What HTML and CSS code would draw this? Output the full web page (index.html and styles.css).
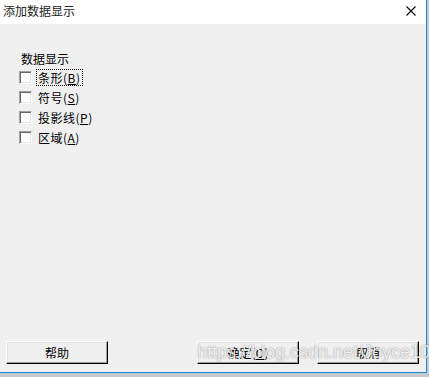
FILE: index.html
```html
<!DOCTYPE html>
<html>
<head>
    <title>添加数据显示</title>
    <link rel="stylesheet" href="styles.css">
</head>
<body>
    <div class="screen">
        <div class="dialog">
            <!-- Title bar -->
            <div class="titlebar">
                <span class="title">添加数据显示</span>
                <svg class="close" width="10" height="10" viewBox="0 0 10 10">
                    <path d="M0.5 0.5 L9.5 9.5 M9.5 0.5 L0.5 9.5" stroke="#000" stroke-width="1.1" fill="none"/>
                </svg>
            </div>
            <!-- Options -->
            <div class="content">
                <div class="group-label">数据显示</div>
                <label class="check-row"><span class="box"></span><span class="text focus">条形(<u>B</u>)</span></label>
                <label class="check-row"><span class="box"></span><span class="text">符号(<u>S</u>)</span></label>
                <label class="check-row"><span class="box"></span><span class="text">投影线(<u>P</u>)</span></label>
                <label class="check-row"><span class="box"></span><span class="text">区域(<u>A</u>)</span></label>
            </div>
            <!-- Buttons -->
            <div class="button-row">
                <button class="btn">帮助</button>
                <div class="spacer"></div>
                <button class="btn">确定(<u>O</u>)</button>
                <button class="btn">取消</button>
            </div>
            <div class="watermark">https://blog.csdn.net/Joyce1001</div>
        </div>
    </div>
</body>
</html>
```

FILE: styles.css
```css
body {
    margin: 0;
    background-color: #c5c9cd;
    font-family: "Noto Sans CJK SC", "DejaVu Sans", sans-serif;
    font-size: 12px;
    color: #000;
}

.screen {
    width: 429px;
    height: 377px;
    overflow: hidden;
}

.dialog {
    position: relative;
    width: 426px;
    height: 372px;
    border-right: 1px solid #1c86d8;
    border-bottom: 1px solid #1c86d8;
    background-color: #f0f0f0;
    display: flex;
    flex-direction: column;
}

/* Title bar */
.titlebar {
    height: 24px;
    background-color: #fff;
    display: flex;
    align-items: center;
    justify-content: space-between;
    padding: 0 10px 0 3px;
}

.title {
    font-family: "Noto Sans CJK SC", sans-serif;
    font-size: 12px;
    color: #222;
    line-height: 24px;
    margin-top: -2px;
}

.close {
    display: block;
    margin-top: -2px;
}

/* Options */
.content {
    flex: 1;
    padding: 27px 0 0 19px;
}

.group-label {
    height: 16px;
    line-height: 16px;
    padding-left: 2px;
    margin-bottom: 0;
}

.check-row {
    display: flex;
    align-items: center;
    height: 20px;
}

.box {
    box-sizing: border-box;
    width: 13px;
    height: 13px;
    background-color: #fff;
    border-top: 1px solid #a0a0a0;
    border-left: 1px solid #a0a0a0;
    border-right: 1px solid #fff;
    border-bottom: 1px solid #fff;
    box-shadow: inset 1px 1px 0 #696969, inset -1px -1px 0 #e3e3e3;
}

.text {
    margin-left: 5px;
    padding: 0 1px;
    line-height: 15px;
    letter-spacing: 0.5px;
}

.focus {
    outline: 1px dotted #000;
}

/* Buttons */
.button-row {
    display: flex;
    padding: 0 7px 8px 6px;
    gap: 18px;
}

.spacer {
    flex: 1;
}

.btn {
    box-sizing: border-box;
    width: 102px;
    height: 23px;
    padding: 0;
    font-family: "Noto Sans CJK SC", sans-serif;
    font-size: 12px;
    color: #000;
    background-color: #f0f0f0;
    border-top: 1px solid #fff;
    border-left: 1px solid #fff;
    border-right: 1px solid #000;
    border-bottom: 1px solid #000;
    box-shadow: inset -1px -1px 0 #a0a0a0, inset 1px 1px 0 #e3e3e3;
}

/* Blog watermark over the buttons */
.watermark {
    position: absolute;
    left: 197px;
    top: 342px;
    font-family: "Liberation Sans", Arial, sans-serif;
    font-size: 18px;
    color: rgba(255, 255, 255, 0.85);
    text-shadow: 0 0 1.5px rgba(70, 70, 70, 0.7);
    white-space: nowrap;
    pointer-events: none;
}
```
